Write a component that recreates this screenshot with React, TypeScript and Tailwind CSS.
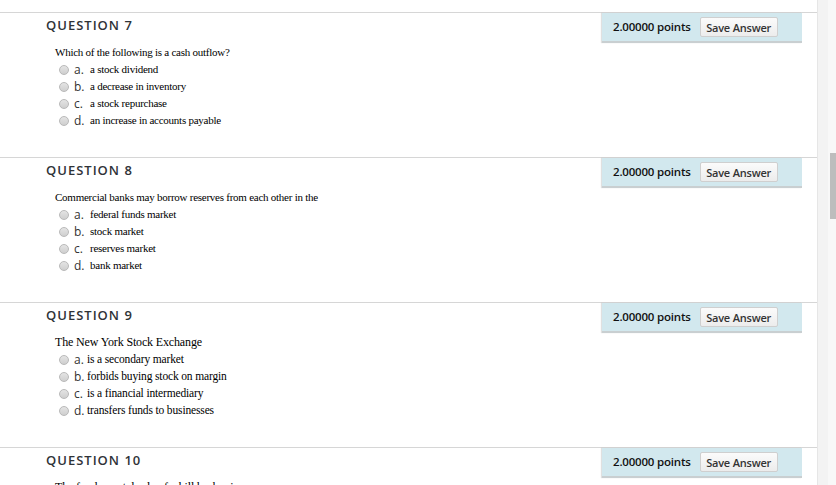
import React from 'react';

interface Question {
  num: number;
  text: string;
  options: string[];
  large?: boolean;
}

const questions: Question[] = [
  {
    num: 7,
    text: 'Which of the following is a cash outflow?',
    options: ['a stock dividend', 'a decrease in inventory', 'a stock repurchase', 'an increase in accounts payable'],
  },
  {
    num: 8,
    text: 'Commercial banks may borrow reserves from each other in the',
    options: ['federal funds market', 'stock market', 'reserves market', 'bank market'],
  },
  {
    num: 9,
    text: 'The New York Stock Exchange',
    options: ['is a secondary market', 'forbids buying stock on margin', 'is a financial intermediary', 'transfers funds to businesses'],
    large: true,
  },
  {
    num: 10,
    text: 'The fundamental role of a bill broker is',
    options: [],
    large: true,
  },
];

const letters = ['a.', 'b.', 'c.', 'd.'];

function Radio() {
  return (
    <span className="inline-block w-[10px] h-[10px] rounded-full border border-[#b9b9b9] bg-gradient-to-b from-[#e4e4e4] to-[#cfcfcf] flex-shrink-0" />
  );
}

function QuestionBlock({ q }: { q: Question }) {
  return (
    <div className="h-[145px] border-t border-[#d6d6d6]">
      {/* Header */}
      <div className="flex items-start justify-between">
        <h3 className="pl-[46px] pt-[3px] text-[13px] leading-[18px] font-semibold tracking-[1px] text-[#2f3338]">
          QUESTION {q.num}
        </h3>
        <div className="mr-[15px] w-[200px] h-[30px] flex items-center gap-[9px] pl-[11px] whitespace-nowrap bg-[#d2e8ee] border-b-2 border-[#c9cfd1] shadow-[-1px_0_1px_rgba(0,0,0,0.12)]">
          <span className="text-[11.5px] font-semibold text-[#111] tracking-[-0.2px]">2.00000 points</span>
          <button className="h-[20px] w-[78px] rounded-[2px] border border-[#cfcfcf] bg-gradient-to-b from-[#fbfbfb] to-[#ececec] text-[11px] font-semibold text-[#333] leading-none tracking-[-0.2px]">
            Save Answer
          </button>
        </div>
      </div>

      {/* Body */}
      <div
        className={
          q.large
            ? "pl-[55px] mt-[1px] text-[12px] tracking-[-0.15px] leading-[17px] text-[#000]"
            : "pl-[55px] mt-[1px] text-[11px] tracking-[-0.25px] leading-[17px] text-[#000]"
        }
        style={{ fontFamily: '"Liberation Serif", "Times New Roman", serif' }}
      >
        <p>{q.text}</p>
        {q.options.map((opt, i) => (
          <div key={opt} className="flex items-center h-[17px] pl-[4px]">
            <Radio />
            <span
              className={
                q.large
                  ? "ml-[5px] inline-block w-[13px] text-[12px] text-[#333] tracking-normal"
                  : "ml-[5px] inline-block w-[16px] text-[12px] text-[#333] tracking-normal"
              }
              style={{ fontFamily: '"Open Sans", "Liberation Sans", sans-serif' }}
            >
              {letters[i]}
            </span>
            <span className={q.large ? "text-[11.5px]" : ""}>{opt}</span>
          </div>
        ))}
      </div>
    </div>
  );
}

export default function App() {
  return (
    <div
      className="w-[836px] h-[485px] overflow-hidden flex bg-white"
      style={{ fontFamily: '"Open Sans", "Liberation Sans", sans-serif' }}
    >
      <div className="w-[817px] pt-[12px]">
        {questions.map((q) => (
          <QuestionBlock key={q.num} q={q} />
        ))}
      </div>

      {/* Scrollbar */}
      <div className="w-[19px] h-full flex border-l border-[#e6e6e6]">
        <div className="w-[10px] h-full bg-[#f3f3f3]" />
        <div className="flex-1 h-full bg-[#f8f8f8] pt-[153px] pl-[2px]">
          <div className="h-[66px] w-full bg-[#bdbdbd]" />
        </div>
      </div>
    </div>
  );
}
